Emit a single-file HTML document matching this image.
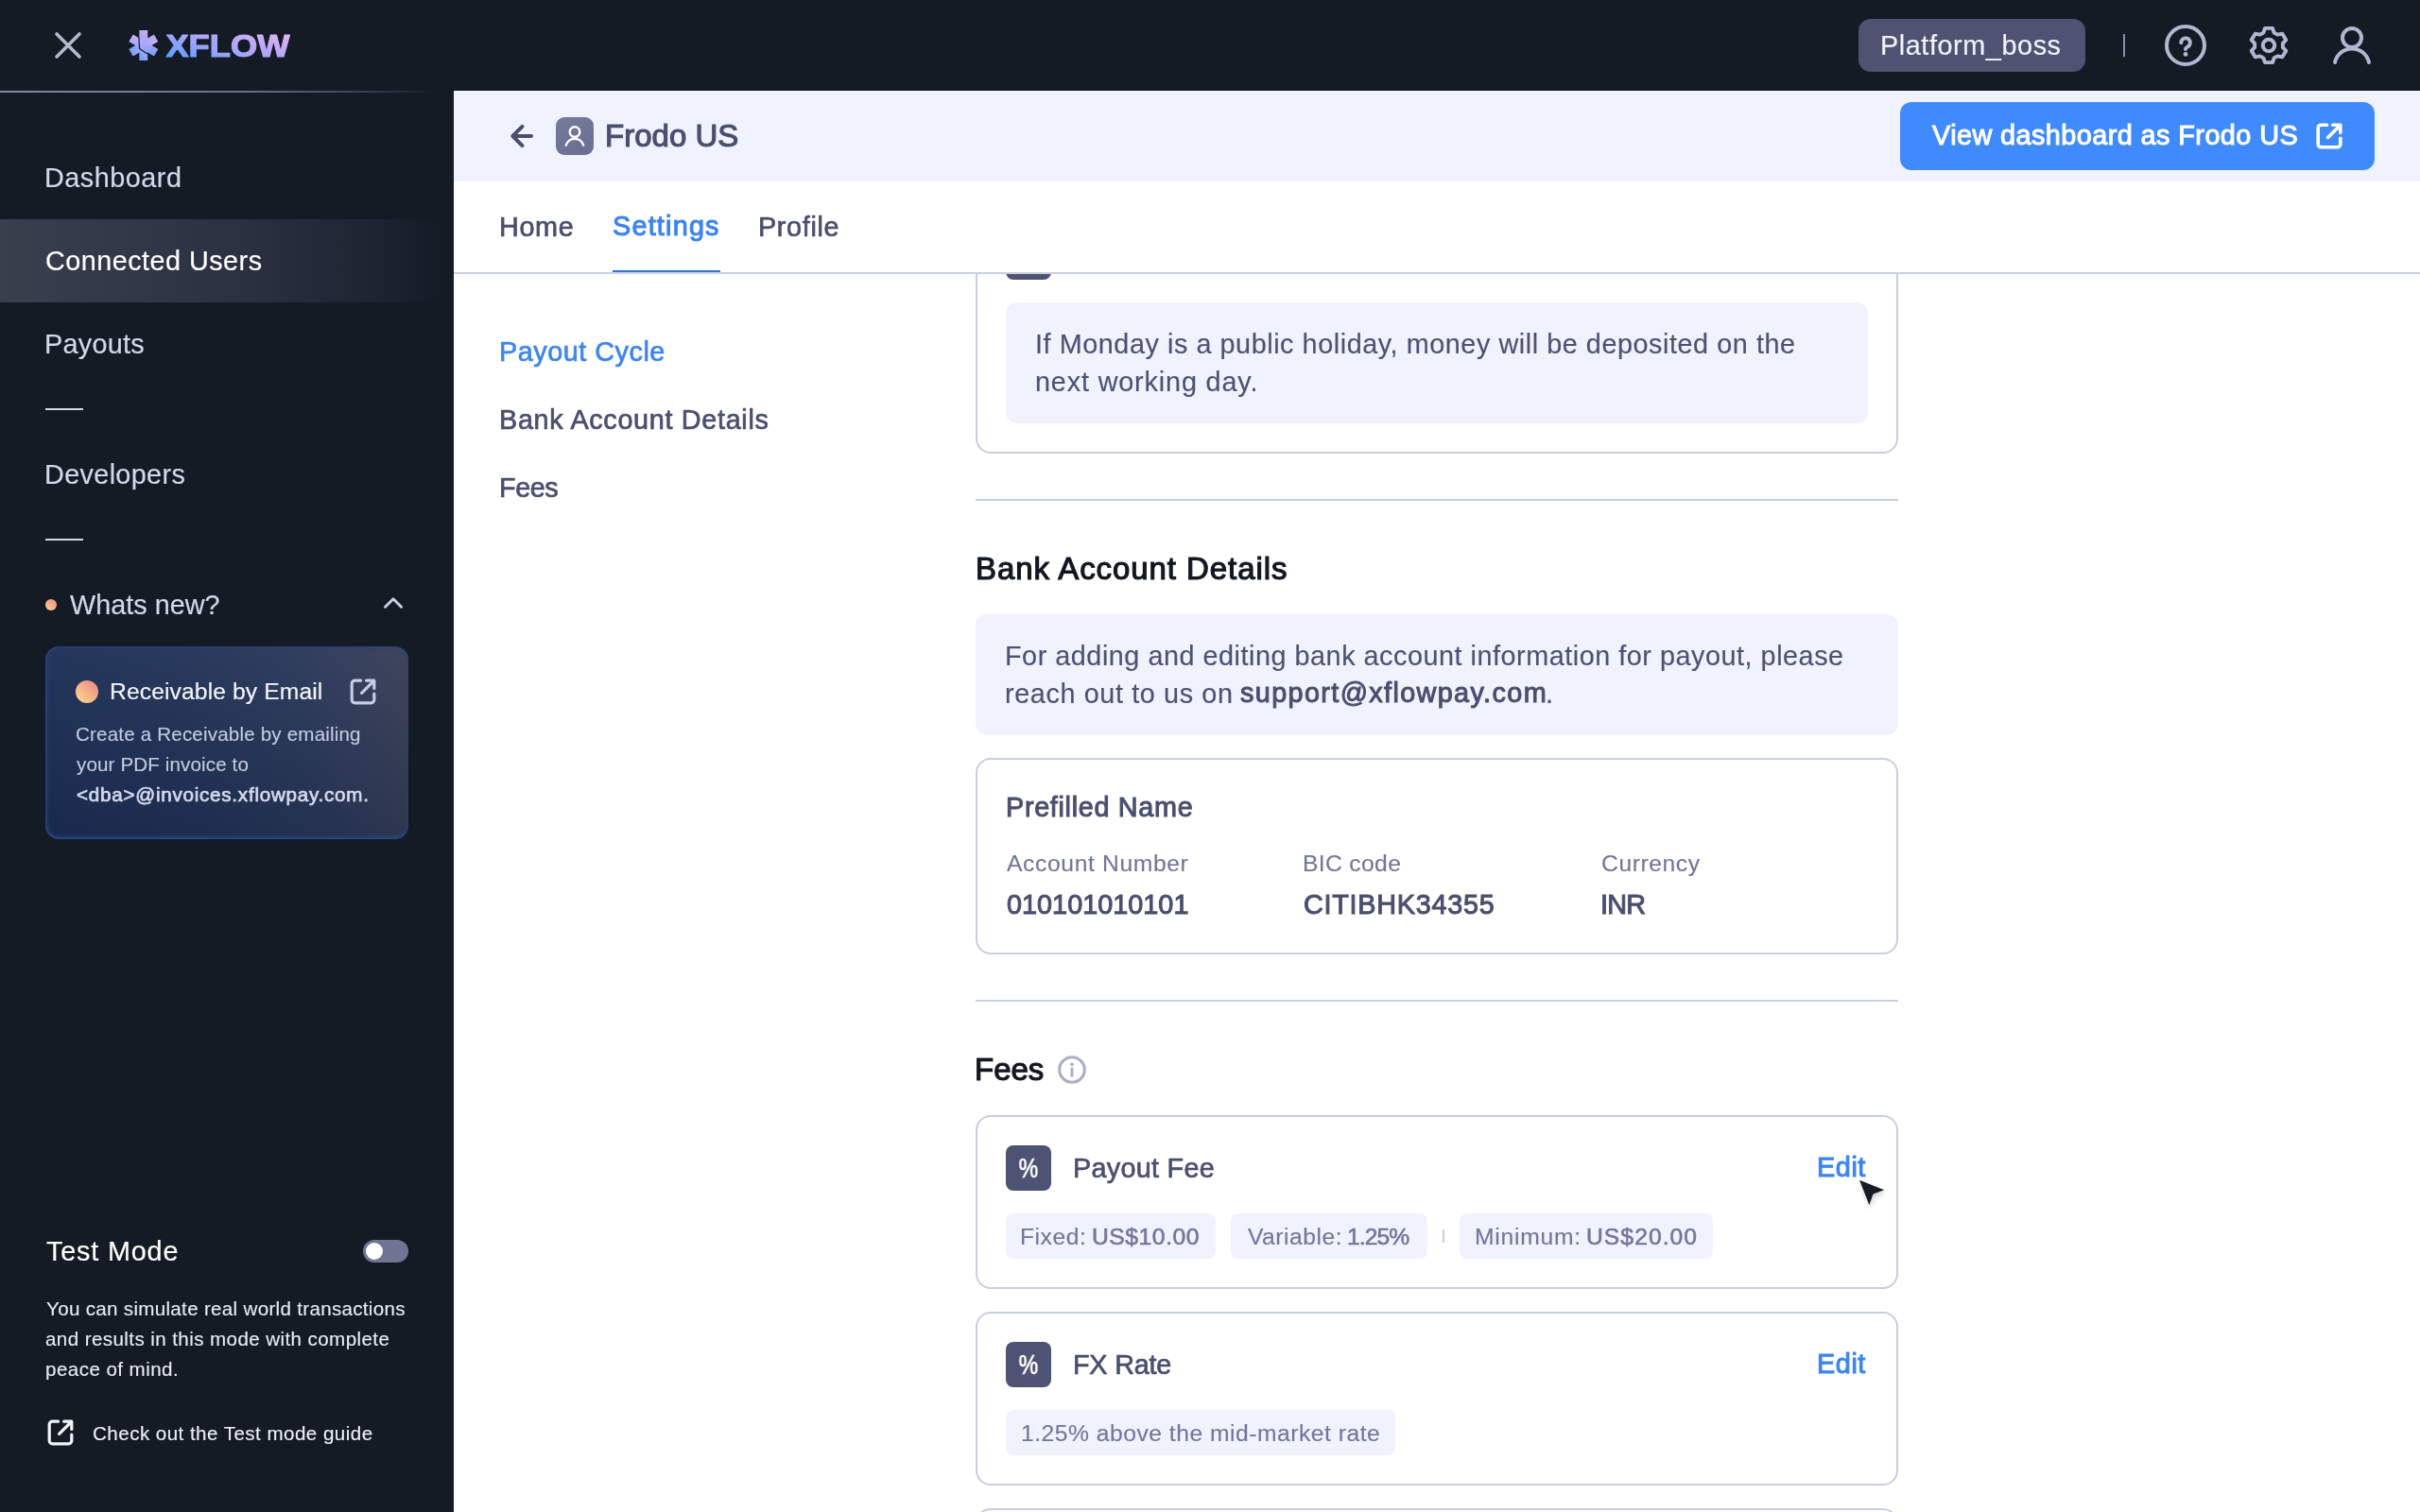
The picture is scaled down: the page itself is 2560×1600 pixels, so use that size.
<!DOCTYPE html>
<html lang="en">
<head>
<meta charset="utf-8">
<title>Xflow – Frodo US – Settings</title>
<style>
html,body{margin:0;padding:0;background:#fff;}
body{width:2560px;height:1600px;overflow:hidden;font-family:"Liberation Sans",sans-serif;}
#app{position:relative;width:2560px;height:1600px;overflow:hidden;background:#fff;}
.abs,.t,svg.i{position:absolute;}
svg.i text{will-change:transform;}
.t{white-space:pre;will-change:transform;font-family:"Liberation Sans",sans-serif;font-weight:400;}
.topbar{position:absolute;left:0;top:0;width:2560px;height:96px;background:#141b25;}
.sidebar{position:absolute;left:0;top:96px;width:480px;height:1504px;background:#141b25;}
.main{position:absolute;left:480px;top:96px;width:2080px;height:1504px;background:#fff;}
.band{position:absolute;left:480px;top:96px;width:2080px;height:96px;background:#f0f3fe;}
.card{position:absolute;box-sizing:border-box;border:2px solid #c9cde1;border-radius:16px;background:#fff;}
.note{position:absolute;background:#f0f3fe;border-radius:12px;}
.chip{position:absolute;background:#f0f3fe;border-radius:8px;height:48px;}
.pct{position:absolute;width:48px;height:48px;border-radius:8px;background:#4f5373;}
.hr{position:absolute;left:1032px;width:976px;height:2px;background:#c9cde1;}
</style>
</head>
<body>
<div id="app">

<!-- ================= MAIN ================= -->
<main class="main"></main>
<section id="content">
  <!-- payout cycle card (scrolled, clipped by tabs) -->
  <div class="card" style="left:1032px;top:200px;width:976px;height:280px;"></div>
  <div class="pct" style="left:1064px;top:248px;"></div>
  <div class="note" style="left:1064px;top:320px;width:912px;height:128px;"></div>
  <div class="hr" style="top:528px;"></div>
  <div class="note" style="left:1032px;top:650px;width:976px;height:128px;"></div>
  <div class="card" style="left:1032px;top:802px;width:976px;height:208px;"></div>
  <div class="hr" style="top:1058px;"></div>
  <!-- info icon -->
  <svg class="i" style="left:1118px;top:1116px" width="32" height="32" viewBox="0 0 32 32" fill="none"><circle cx="16" cy="16" r="13.3" stroke="#a9acc6" stroke-width="3"/><circle cx="16" cy="10.3" r="1.9" fill="#a9acc6"/><path d="M16 15v7.4" stroke="#a9acc6" stroke-width="2.8" stroke-linecap="round"/></svg>
  <!-- payout fee -->
  <div class="card" style="left:1032px;top:1180px;width:976px;height:184px;"></div>
  <div class="pct" style="left:1064px;top:1212px;"></div>
  <div class="chip" style="left:1064px;top:1284px;width:222px;"></div>
  <div class="chip" style="left:1302px;top:1284px;width:208px;"></div>
  <div class="abs" style="left:1526px;top:1301px;width:2px;height:14px;background:#c9cde0;"></div>
  <div class="chip" style="left:1544px;top:1284px;width:268px;"></div>
  <!-- fx rate -->
  <div class="card" style="left:1032px;top:1388px;width:976px;height:184px;"></div>
  <div class="pct" style="left:1064px;top:1420px;"></div>
  <div class="chip" style="left:1064px;top:1492px;width:412px;"></div>
  <!-- next card peeking -->
  <div class="card" style="left:1032px;top:1596px;width:976px;height:184px;"></div>
<span class="t" style="left:1094.6px;top:350px;font-size:28.8px;line-height:28.8px;letter-spacing:0.55px;color:#4e5272;-webkit-text-stroke:0.17px currentColor;">If Monday is a public holiday, money will be deposited on the</span>
<span class="t" style="left:1095.4px;top:390px;font-size:28.8px;line-height:28.8px;letter-spacing:0.84px;color:#4e5272;-webkit-text-stroke:0.17px currentColor;">next working day.</span>
<span class="t" style="left:1031.6px;top:585px;font-size:33.0px;line-height:33.0px;letter-spacing:0.93px;color:#131722;-webkit-text-stroke:1.16px currentColor;">Bank Account Details</span>
<span class="t" style="left:1063.0px;top:680px;font-size:28.8px;line-height:28.8px;letter-spacing:0.52px;color:#4e5272;-webkit-text-stroke:0.17px currentColor;">For adding and editing bank account information for payout, please</span>
<span class="t" style="left:1063.4px;top:720px;font-size:28.8px;line-height:28.8px;letter-spacing:0.61px;color:#4e5272;-webkit-text-stroke:0.17px currentColor;">reach out to us on</span>
<span class="t" style="left:1311.9px;top:719px;font-size:28.8px;line-height:28.8px;letter-spacing:1.37px;color:#4b4f6e;-webkit-text-stroke:1.01px currentColor;">support@xflowpay.com</span>
<span class="t" style="left:1635.1px;top:720px;font-size:28.8px;line-height:28.8px;letter-spacing:0.00px;color:#4e5272;-webkit-text-stroke:0.17px currentColor;">.</span>
<span class="t" style="left:1063.5px;top:840px;font-size:28.8px;line-height:28.8px;letter-spacing:0.68px;color:#4b4f6e;-webkit-text-stroke:1.01px currentColor;">Prefilled Name</span>
<span class="t" style="left:1065.0px;top:902px;font-size:24.7px;line-height:24.7px;letter-spacing:0.61px;color:#72769a;-webkit-text-stroke:0.15px currentColor;">Account Number</span>
<span class="t" style="left:1378.1px;top:902px;font-size:24.7px;line-height:24.7px;letter-spacing:0.33px;color:#72769a;-webkit-text-stroke:0.15px currentColor;">BIC code</span>
<span class="t" style="left:1693.6px;top:902px;font-size:24.7px;line-height:24.7px;letter-spacing:0.55px;color:#72769a;-webkit-text-stroke:0.15px currentColor;">Currency</span>
<span class="t" style="left:1064.6px;top:943px;font-size:28.8px;line-height:28.8px;letter-spacing:0.02px;color:#4b4f6e;-webkit-text-stroke:1.01px currentColor;">010101010101</span>
<span class="t" style="left:1379.2px;top:943px;font-size:28.8px;line-height:28.8px;letter-spacing:0.74px;color:#4b4f6e;-webkit-text-stroke:1.01px currentColor;">CITIBHK34355</span>
<span class="t" style="left:1692.6px;top:943px;font-size:28.8px;line-height:28.8px;letter-spacing:-0.79px;color:#4b4f6e;-webkit-text-stroke:1.01px currentColor;">INR</span>
<span class="t" style="left:1031.1px;top:1115px;font-size:33.0px;line-height:33.0px;letter-spacing:-0.01px;color:#131722;-webkit-text-stroke:1.16px currentColor;">Fees</span>
<span class="t" style="left:1135.1px;top:1222px;font-size:28.8px;line-height:28.8px;letter-spacing:0.28px;color:#4b4f6e;-webkit-text-stroke:0.69px currentColor;">Payout Fee</span>
<span class="t" style="left:1922.1px;top:1221px;font-size:28.8px;line-height:28.8px;letter-spacing:0.58px;color:#3d85ee;-webkit-text-stroke:1.01px currentColor;">Edit</span>
<span class="t" style="left:1079.4px;top:1297px;font-size:24.7px;line-height:24.7px;letter-spacing:0.52px;color:#72769a;-webkit-text-stroke:0.15px currentColor;">Fixed:</span>
<span class="t" style="left:1154.9px;top:1297px;font-size:24.7px;line-height:24.7px;letter-spacing:0.53px;color:#72769a;-webkit-text-stroke:0.59px currentColor;">US$10.00</span>
<span class="t" style="left:1319.5px;top:1297px;font-size:24.7px;line-height:24.7px;letter-spacing:0.49px;color:#72769a;-webkit-text-stroke:0.15px currentColor;">Variable:</span>
<span class="t" style="left:1424.7px;top:1297px;font-size:24.7px;line-height:24.7px;letter-spacing:-0.97px;color:#72769a;-webkit-text-stroke:0.59px currentColor;">1.25%</span>
<span class="t" style="left:1559.6px;top:1297px;font-size:24.7px;line-height:24.7px;letter-spacing:0.75px;color:#72769a;-webkit-text-stroke:0.15px currentColor;">Minimum:</span>
<span class="t" style="left:1677.7px;top:1297px;font-size:24.7px;line-height:24.7px;letter-spacing:1.04px;color:#72769a;-webkit-text-stroke:0.59px currentColor;">US$20.00</span>
<span class="t" style="left:1135.1px;top:1430px;font-size:28.8px;line-height:28.8px;letter-spacing:-0.22px;color:#4b4f6e;-webkit-text-stroke:0.69px currentColor;">FX Rate</span>
<span class="t" style="left:1922.1px;top:1429px;font-size:28.8px;line-height:28.8px;letter-spacing:0.58px;color:#3d85ee;-webkit-text-stroke:1.01px currentColor;">Edit</span>
<span class="t" style="left:1079.9px;top:1505px;font-size:24.7px;line-height:24.7px;letter-spacing:0.49px;color:#72769a;-webkit-text-stroke:0.15px currentColor;">1.25% above the mid-market rate</span>
  <span class="t" style="left:1068px;top:1220px;width:40px;text-align:center;font-size:29px;line-height:32px;color:#fff;-webkit-text-stroke:.7px #fff;transform:scaleX(.8);">%</span>
  <span class="t" style="left:1068px;top:1428px;width:40px;text-align:center;font-size:29px;line-height:32px;color:#fff;-webkit-text-stroke:.7px #fff;transform:scaleX(.8);">%</span>
  <!-- cursor -->
  <svg class="i" style="left:1955px;top:1238px;overflow:visible" width="56" height="56" viewBox="0 0 56 56"><defs><filter id="cs" x="-50%" y="-50%" width="200%" height="200%"><feDropShadow dx="1" dy="3" stdDeviation="2.5" flood-color="#1a2233" flood-opacity=".22"/></filter></defs><path d="M12 10.8 L38.2 21.2 L26.5 25.4 L22.4 37 Z" fill="#151b26" filter="url(#cs)"/></svg>
</section>

<!-- sub navigation -->
<nav id="subnav">
<span class="t" style="left:527.9px;top:358px;font-size:28.8px;line-height:28.8px;letter-spacing:0.52px;color:#3d85ee;-webkit-text-stroke:0.69px currentColor;">Payout Cycle</span>
<span class="t" style="left:527.9px;top:430px;font-size:28.8px;line-height:28.8px;letter-spacing:0.67px;color:#4b4f6e;-webkit-text-stroke:0.69px currentColor;">Bank Account Details</span>
<span class="t" style="left:527.9px;top:502px;font-size:28.8px;line-height:28.8px;letter-spacing:-0.44px;color:#4b4f6e;-webkit-text-stroke:0.69px currentColor;">Fees</span>
</nav>

<!-- tabs strip (covers scrolled content) -->
<div class="abs" style="left:480px;top:192px;width:2080px;height:96px;background:#fff;"></div>
<div class="abs" style="left:480px;top:288px;width:2080px;height:2px;background:#cbd0e1;"></div>
<div class="abs" style="left:648px;top:286px;width:114px;height:2px;background:#3673d6;"></div>
<div class="abs" style="left:648px;top:288px;width:114px;height:2px;background:#cdd6f3;"></div>
<nav id="tabs">
<span class="t" style="left:528.1px;top:226px;font-size:28.8px;line-height:28.8px;letter-spacing:0.62px;color:#4b4f6e;-webkit-text-stroke:0.69px currentColor;">Home</span>
<span class="t" style="left:648.1px;top:225px;font-size:28.8px;line-height:28.8px;letter-spacing:1.21px;color:#3d85ee;-webkit-text-stroke:1.01px currentColor;">Settings</span>
<span class="t" style="left:801.9px;top:226px;font-size:28.8px;line-height:28.8px;letter-spacing:0.66px;color:#4b4f6e;-webkit-text-stroke:0.69px currentColor;">Profile</span>
</nav>

<!-- header band -->
<div class="band"></div>
<svg class="i" style="left:536px;top:128px" width="32" height="32" viewBox="0 0 32 32" fill="none" stroke="#4b4f6e" stroke-width="4" stroke-linecap="round" stroke-linejoin="round"><path d="M26 16H6.5M16.5 5.8 6.3 16l10.2 10.2"/></svg>
<div class="abs" style="left:588px;top:124px;width:40px;height:40px;border-radius:9px;background:linear-gradient(160deg,#767a9d,#6a6e90);"></div>
<svg class="i" style="left:588px;top:124px" width="40" height="40" viewBox="0 0 40 40" fill="none" stroke="#fff" stroke-width="2.4" stroke-linecap="round"><circle cx="20" cy="15.6" r="5.3"/><path d="M10.8 29.6a9.6 9.6 0 0 1 18.4 0"/></svg>
<div class="abs" style="left:2010px;top:108px;width:502px;height:72px;border-radius:12px;background:#3f8bfd;"></div>
<svg class="i" style="left:2450px;top:130px" width="28" height="28" viewBox="0 0 28 28" fill="none" stroke="#fff" stroke-width="3.6" stroke-linecap="round" stroke-linejoin="round"><path d="M11.6 2.2H5.4A3.2 3.2 0 0 0 2.2 5.4v17.2a3.2 3.2 0 0 0 3.2 3.2h17.2a3.2 3.2 0 0 0 3.2-3.2v-6.4"/><path d="M12.6 15.4 25.6 2.4M17.6 2.2h8.2v8.2"/></svg>
<div id="head">
<span class="t" style="left:639.6px;top:127px;font-size:33.0px;line-height:33.0px;letter-spacing:0.01px;color:#4b4f6e;-webkit-text-stroke:1.16px currentColor;">Frodo US</span>
<span class="t" style="left:2044.4px;top:129px;font-size:28.8px;line-height:28.8px;letter-spacing:0.44px;color:#ffffff;-webkit-text-stroke:1.01px currentColor;">View dashboard as Frodo US</span>
</div>

<!-- ================= SIDEBAR ================= -->
<aside class="sidebar"></aside>
<div id="side">
  <div class="abs" style="left:0;top:232px;width:480px;height:88px;background:linear-gradient(90deg,#3a3f4e 0%,#323847 28%,#2a303f 55%,#1f2533 80%,#141b25 98%);"></div>
  <div class="abs" style="left:48px;top:432px;width:40px;height:2px;background:#d5d9e8;"></div>
  <div class="abs" style="left:48px;top:570px;width:40px;height:2px;background:#d5d9e8;"></div>
  <div class="abs" style="left:48px;top:634px;width:12px;height:12px;border-radius:50%;background:linear-gradient(45deg,#fbd58c,#ee8a84);"></div>
  <svg class="i" style="left:402px;top:626px" width="28" height="24" viewBox="0 0 28 24" fill="none" stroke="#c9cee2" stroke-width="3" stroke-linecap="round" stroke-linejoin="round"><path d="M5.5 16.2 14 7.8l8.5 8.4"/></svg>
  <!-- whats new card -->
  <div class="abs" style="left:48px;top:684px;width:384px;height:204px;border-radius:14px;background:linear-gradient(180deg,rgba(255,255,255,.035) 0%,rgba(0,0,0,.10) 100%),linear-gradient(78deg,#1c2e56 0%,#203257 40%,#293859 72%,#393e57 100%);box-shadow:inset 0 -3px 4px -1px #2b4c8c,inset 3px 0 5px -2px #2a4a86,inset 0 2px 3px -1px #29457c;"></div>
  <div class="abs" style="left:80px;top:720px;width:24px;height:24px;border-radius:50%;background:linear-gradient(45deg,#fbd68c 10%,#ee8c84 90%);"></div>
  <svg class="i" style="left:370px;top:718px" width="28" height="28" viewBox="0 0 28 28" fill="none" stroke="#c6cce6" stroke-width="3.2" stroke-linecap="round" stroke-linejoin="round"><path d="M11.6 2.2H5.4A3.2 3.2 0 0 0 2.2 5.4v17.2a3.2 3.2 0 0 0 3.2 3.2h17.2a3.2 3.2 0 0 0 3.2-3.2v-6.4"/><path d="M12.6 15.4 25.6 2.4M17.6 2.2h8.2v8.2"/></svg>
  <!-- toggle -->
  <div class="abs" style="left:384px;top:1312px;width:48px;height:24px;border-radius:12px;background:#717594;"></div>
  <div class="abs" style="left:387px;top:1315px;width:18px;height:18px;border-radius:50%;background:#fff;"></div>
  <svg class="i" style="left:50px;top:1502px" width="28" height="28" viewBox="0 0 28 28" fill="none" stroke="#f3f4fa" stroke-width="3.2" stroke-linecap="round" stroke-linejoin="round"><path d="M11.6 2.2H5.4A3.2 3.2 0 0 0 2.2 5.4v17.2a3.2 3.2 0 0 0 3.2 3.2h17.2a3.2 3.2 0 0 0 3.2-3.2v-6.4"/><path d="M12.6 15.4 25.6 2.4M17.6 2.2h8.2v8.2"/></svg>
<span class="t" style="left:47.4px;top:174px;font-size:28.8px;line-height:28.8px;letter-spacing:0.51px;color:#d4d8e9;-webkit-text-stroke:0.17px currentColor;">Dashboard</span>
<span class="t" style="left:48.3px;top:262px;font-size:28.8px;line-height:28.8px;letter-spacing:0.47px;color:#ffffff;-webkit-text-stroke:0.17px currentColor;">Connected Users</span>
<span class="t" style="left:47.4px;top:350px;font-size:28.8px;line-height:28.8px;letter-spacing:0.26px;color:#d4d8e9;-webkit-text-stroke:0.17px currentColor;">Payouts</span>
<span class="t" style="left:47.4px;top:488px;font-size:28.8px;line-height:28.8px;letter-spacing:0.35px;color:#d4d8e9;-webkit-text-stroke:0.17px currentColor;">Developers</span>
<span class="t" style="left:73.6px;top:626px;font-size:28.8px;line-height:28.8px;letter-spacing:0.01px;color:#d4d8e9;-webkit-text-stroke:0.17px currentColor;">Whats new?</span>
<span class="t" style="left:115.7px;top:720px;font-size:24.7px;line-height:24.7px;letter-spacing:0.09px;color:#f4f5fb;-webkit-text-stroke:0.15px currentColor;">Receivable by Email</span>
<span class="t" style="left:80.2px;top:767px;font-size:20.6px;line-height:20.6px;letter-spacing:0.17px;color:#c3cae2;-webkit-text-stroke:0.12px currentColor;">Create a Receivable by emailing</span>
<span class="t" style="left:81.0px;top:799px;font-size:20.6px;line-height:20.6px;letter-spacing:0.12px;color:#c3cae2;-webkit-text-stroke:0.12px currentColor;">your PDF invoice to</span>
<span class="t" style="left:81.1px;top:831px;font-size:20.6px;line-height:20.6px;letter-spacing:0.76px;color:#d3d9ee;-webkit-text-stroke:0.72px currentColor;">&lt;dba&gt;@invoices.xflowpay.com.</span>
<span class="t" style="left:48.7px;top:1310px;font-size:28.8px;line-height:28.8px;letter-spacing:0.82px;color:#ffffff;-webkit-text-stroke:0.17px currentColor;">Test Mode</span>
<span class="t" style="left:48.5px;top:1375px;font-size:20.6px;line-height:20.6px;letter-spacing:0.30px;color:#e9ecf6;-webkit-text-stroke:0.12px currentColor;">You can simulate real world transactions</span>
<span class="t" style="left:48.4px;top:1407px;font-size:20.6px;line-height:20.6px;letter-spacing:0.40px;color:#e9ecf6;-webkit-text-stroke:0.12px currentColor;">and results in this mode with complete</span>
<span class="t" style="left:47.9px;top:1439px;font-size:20.6px;line-height:20.6px;letter-spacing:0.43px;color:#e9ecf6;-webkit-text-stroke:0.12px currentColor;">peace of mind.</span>
<span class="t" style="left:98.1px;top:1507px;font-size:20.6px;line-height:20.6px;letter-spacing:0.45px;color:#eef0f8;-webkit-text-stroke:0.12px currentColor;">Check out the Test mode guide</span>
</div>

<!-- ================= TOP BAR ================= -->
<header class="topbar"></header>
<div id="top">
  <div class="abs" style="left:0;top:96px;width:480px;height:2px;background:linear-gradient(90deg,#8488a8 0%,#6a6e8c 55%,#3a4055 80%,rgba(20,27,37,0) 96%);"></div>
  <svg class="i" style="left:56px;top:32px" width="32" height="32" viewBox="0 0 32 32" fill="none" stroke="#b6b9cb" stroke-width="3.6" stroke-linecap="round"><path d="M4 4l24 24M28 4 4 28"/></svg>
  <!-- logo -->
  <svg class="i" style="left:132px;top:28px" width="184" height="40" viewBox="0 0 184 40">
    <defs><linearGradient id="lg" x1="43" y1="32.4" x2="60.3" y2="-26.3" gradientUnits="userSpaceOnUse"><stop offset="0" stop-color="#5a9bff"/><stop offset=".39" stop-color="#9ea5fb"/><stop offset=".61" stop-color="#b8a8f7"/><stop offset="1" stop-color="#e3b5f4"/></linearGradient>
    <linearGradient id="lg2" x1="6" y1="32" x2="34" y2="8" gradientUnits="userSpaceOnUse"><stop offset="0" stop-color="#5a9bff"/><stop offset=".45" stop-color="#9fa6fb"/><stop offset="1" stop-color="#ddb1f4"/></linearGradient></defs>
    <g fill="url(#lg2)"><rect x="15.4" y="4" width="8.8" height="32" rx=".5"/><rect x="15.4" y="4.6" width="8.8" height="30.8" rx=".5" transform="rotate(60 19.8 20)"/><rect x="15.4" y="4.6" width="8.8" height="30.8" rx=".5" transform="rotate(-60 19.8 20)"/></g>
    <path d="M14.9 11.6 15.6 23.6 24.8 29.4" fill="none" stroke="#141b25" stroke-width="1.2" stroke-linejoin="round"/>
    <text x="43.4" y="32.2" font-family="Liberation Sans, sans-serif" font-weight="700" font-size="33.8" textLength="131" lengthAdjust="spacingAndGlyphs" fill="url(#lg)" stroke="url(#lg)" stroke-width="1.2" stroke-linejoin="round">XFLOW</text>
  </svg>
  <div class="abs" style="left:1966px;top:20px;width:240px;height:56px;border-radius:13px;background:#4f5371;"></div>
  <div class="abs" style="left:2246px;top:36px;width:2px;height:24px;background:#8a8da9;"></div>
  <!-- help -->
  <svg class="i" style="left:2288px;top:24px" width="48" height="48" viewBox="0 0 48 48" fill="none" stroke="#b3b6d0" stroke-width="4" stroke-linecap="round" stroke-linejoin="round"><circle cx="24" cy="24" r="20"/><path d="M19.3 21.2a4.8 4.8 0 1 1 7 4.2c-1.6.9-2.3 1.5-2.3 2.6" stroke-width="3.9"/><circle cx="24" cy="33.4" r="2.4" fill="#b3b6d0" stroke="none"/></svg>
  <!-- gear -->
  <svg class="i" style="left:2376px;top:24px" width="48" height="48" viewBox="0 0 48 48" fill="none" stroke="#b3b6d0" stroke-width="4" stroke-linejoin="round"><circle cx="24" cy="24" r="6.2"/><path transform="translate(24 24) scale(1.05 1.005) translate(-24 -24)" stroke-width="3.8" d="M20.2 6h7.6l1.5 4.6 3.6 2.1 4.7-1 3.8 6.6-3.2 3.6v4.2l3.2 3.6-3.8 6.6-4.7-1-3.6 2.1-1.5 4.6h-7.6l-1.5-4.6-3.6-2.1-4.7 1-3.8-6.6 3.2-3.6v-4.2l-3.2-3.6 3.8-6.6 4.7 1 3.6-2.1z"/></svg>
  <!-- user -->
  <svg class="i" style="left:2464px;top:24px" width="48" height="48" viewBox="0 0 48 48" fill="none" stroke="#b3b6d0" stroke-width="4" stroke-linecap="round"><circle cx="24" cy="16" r="10"/><path d="M6 42a18.4 18.4 0 0 1 36 0"/></svg>
<span class="t" style="left:1989.4px;top:34px;font-size:28.8px;line-height:28.8px;letter-spacing:0.58px;color:#f1f2f9;-webkit-text-stroke:0.17px currentColor;">Platform_boss</span>
</div>

</div>
</body>
</html>
